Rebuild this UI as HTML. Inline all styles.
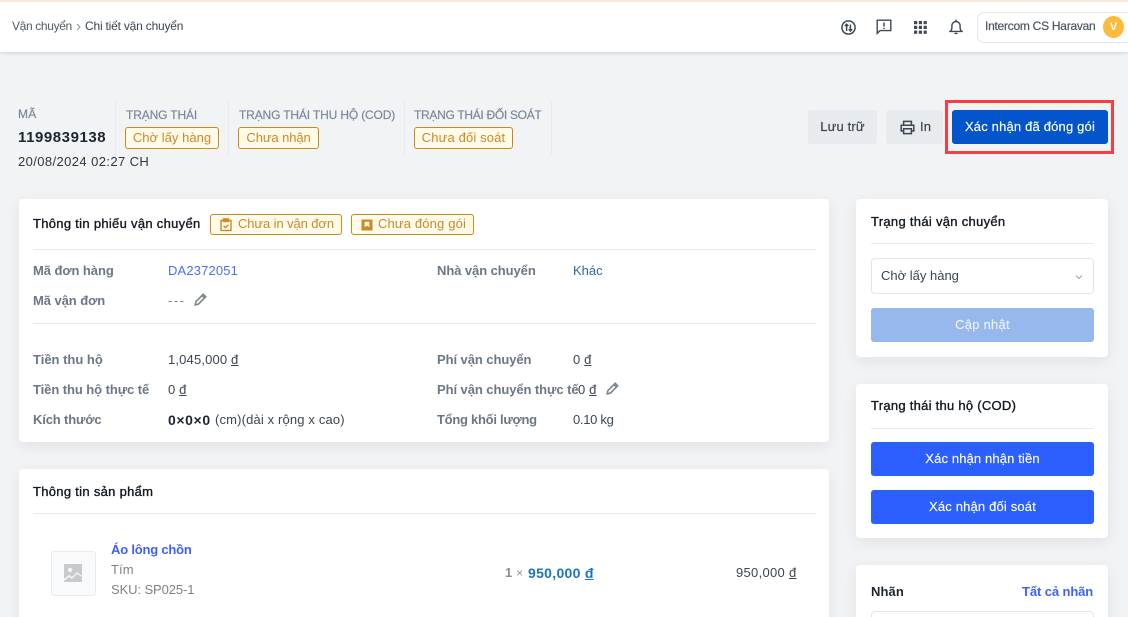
<!DOCTYPE html>
<html lang="vi"><head><meta charset="utf-8"><title>Chi tiết vận chuyển</title>
<style>
html,body{margin:0;padding:0;width:1128px;height:617px;overflow:hidden}
#p{width:1128px;height:617px;overflow:hidden;position:relative;background:#f1f3f5;font-family:"Liberation Sans","Noto Sans CJK JP",sans-serif;font-size:13px;color:#212b36}
.t{position:absolute;line-height:20px;white-space:nowrap;letter-spacing:.16px}
.l{color:#6b7785;font-weight:700;font-size:13px;letter-spacing:-.07px}
.h{color:#78859a;font-size:12px;letter-spacing:-.16px;-webkit-text-stroke:.15px #78859a}
.v{color:#3a4552}
.ti{color:#111820;letter-spacing:.3px;-webkit-text-stroke:.35px #111820}
.card{position:absolute;background:#fff;border-radius:4px;box-shadow:0 4px 14px rgba(50,60,80,.09)}
.hr{position:absolute;height:1px;background:#e6e9ed}
.tag{position:absolute;box-sizing:border-box;border:1px solid #cb8a14;border-radius:3px;background:#fffbe8;color:#c98a2b;line-height:20px;white-space:nowrap;text-align:center;letter-spacing:.03px}
.btn{position:absolute;box-sizing:border-box;border-radius:3px;text-align:center;white-space:nowrap;letter-spacing:.15px;-webkit-text-stroke:.15px currentColor}
.vs{position:absolute;width:1px;background:#e7e9ec}
svg{position:absolute;display:block}
u{text-underline-offset:1px}
</style></head><body><div id="p">
<div style="position:absolute;left:0;top:0;width:1128px;height:52px;background:#fff;box-shadow:0 1px 4px rgba(0,0,0,.14)"></div>
<div style="position:absolute;left:0;top:0;width:1128px;height:2px;background:#f8eadb"></div>

<div class="t" style="left:12px;top:16px;font-size:12px;color:#4f5b68;letter-spacing:-.35px">Vận chuyển</div>
<svg style="left:75px;top:23px" width="8" height="8" viewBox="0 0 8 8"><path d="M2 1l3 3-3 3" fill="none" stroke="#8d96a1" stroke-width="1"/></svg>
<div class="t" style="left:85px;top:16px;font-size:12px;color:#3a4552;letter-spacing:-.2px">Chi tiết vận chuyển</div>

<svg style="left:840px;top:19px" width="17" height="17" viewBox="0 0 17 17" fill="none" stroke="#3f4a56" stroke-width="1.5"><circle cx="8.5" cy="8.5" r="6.6"/><path d="M6.6 12V5.3M4.9 7l1.7-1.8L8.3 7M10.4 5.5V12M8.8 10.2l1.6 1.8 1.7-1.8"/></svg>
<svg style="left:876px;top:19px" width="16" height="16" viewBox="0 0 16 16" fill="none" stroke="#3f4a56" stroke-width="1.4"><path d="M1.2 1.2h13.6v10.4H4L1.2 14.4z"/><path d="M8 3.5v4M8 8.8v1.2" stroke-width="1.5"/></svg>
<svg style="left:914px;top:21px" width="13" height="13" viewBox="0 0 13 13" fill="#3f4a56"><rect x="0" y="0" width="3.2" height="3.2"/><rect x="4.8" y="0" width="3.2" height="3.2"/><rect x="9.6" y="0" width="3.2" height="3.2"/><rect x="0" y="4.8" width="3.2" height="3.2"/><rect x="4.8" y="4.8" width="3.2" height="3.2"/><rect x="9.6" y="4.8" width="3.2" height="3.2"/><rect x="0" y="9.6" width="3.2" height="3.2"/><rect x="4.8" y="9.6" width="3.2" height="3.2"/><rect x="9.6" y="9.6" width="3.2" height="3.2"/></svg>
<svg style="left:949px;top:19px" width="14" height="16" viewBox="0 0 14 16" fill="none" stroke="#3f4a56" stroke-width="1.4"><path d="M1.2 12.4h11.6c-1.2-1-1.7-2-1.7-3.6V6.6A4.1 4.1 0 0 0 7 2.5a4.1 4.1 0 0 0-4.1 4.1v2.2c0 1.6-.5 2.6-1.7 3.6z"/><path d="M7 .6v2M5.4 14.4h3.2"/></svg>

<div style="position:absolute;left:977px;top:12px;width:170px;height:31px;box-sizing:border-box;border:1px solid #e4e7eb;border-radius:7px;background:#fff"></div>
<div class="t" style="left:985px;top:16px;font-size:12px;color:#4b5663;letter-spacing:-.26px;-webkit-text-stroke:.2px #4b5663">Intercom CS Haravan</div>
<div style="position:absolute;left:1103px;top:16px;width:21px;height:22px;border-radius:50%;background:#fdbb3c;color:#fff;font-size:11px;font-weight:700;text-align:center;line-height:22px">V</div>

<div class="t h" style="left:18px;top:104px;letter-spacing:.2px">MÃ</div>
<div class="t" style="left:18px;top:128px;font-size:15px;font-weight:700;color:#1c2630;letter-spacing:.56px">1199839138</div>
<div class="t" style="left:18px;top:152px;color:#2d3743;letter-spacing:.4px">20/08/2024 02:27 CH</div>
<div class="vs" style="left:115px;top:101px;height:54px"></div>
<div class="t h" style="left:126px;top:105px;letter-spacing:-.14px">TRẠNG THÁI</div>
<div class="tag" style="left:125px;top:127px;width:94px;height:22px">Chờ lấy hàng</div>
<div class="vs" style="left:228px;top:101px;height:54px"></div>
<div class="t h" style="left:239px;top:105px;letter-spacing:-.15px">TRẠNG THÁI THU HỘ (COD)</div>
<div class="tag" style="left:238px;top:127px;width:81px;height:22px;letter-spacing:-.1px">Chưa nhận</div>
<div class="vs" style="left:404px;top:101px;height:54px"></div>
<div class="t h" style="left:414px;top:105px;letter-spacing:-.3px">TRẠNG THÁI ĐỐI SOÁT</div>
<div class="tag" style="left:414px;top:127px;width:99px;height:22px;letter-spacing:.15px">Chưa đối soát</div>
<div class="vs" style="left:551px;top:101px;height:54px"></div>

<div class="btn" style="left:808px;top:110px;width:69px;height:34px;background:#e8ebee;line-height:34px;color:#3a3f45">Lưu trữ</div>
<div class="btn" style="left:886px;top:110px;width:57px;height:34px;background:#e8ebee;line-height:34px;color:#3a3f45;text-align:left;padding-left:34px">In</div>
<svg style="left:900px;top:120px" width="15" height="15" viewBox="0 0 15 15" fill="none" stroke="#3f4650" stroke-width="1.5"><path d="M3.6 5V1.4h7.8V5M3.6 11H1.2V5.2h12.6V11h-2.4"/><path d="M3.6 8.8h7.8v4.8H3.6z"/></svg>
<div style="position:absolute;left:945px;top:100px;width:169px;height:54px;box-sizing:border-box;border:3px solid #f33f44"></div>
<div class="btn" style="left:952px;top:110px;width:156px;height:34px;background:#0454cc;color:#fff;line-height:34px;letter-spacing:.18px">Xác nhận đã đóng gói</div>

<!-- main card -->
<div class="card" style="left:19px;top:199px;width:810px;height:243px"></div>
<div class="t ti" style="left:33px;top:214px">Thông tin phiếu vận chuyển</div>
<div class="tag" style="left:210px;top:214px;width:132px;height:21px;padding-left:20px;line-height:18px;letter-spacing:-.1px">Chưa in vận đơn</div>
<svg style="left:219px;top:218px" width="14" height="14" viewBox="0 0 14 14" fill="none" stroke="#c98a2b" stroke-width="1.4"><path d="M4 2.4H2v10h10v-10h-2"/><path d="M4.4 1h5.2v2.6H4.4z" fill="#c98a2b"/><path d="M4.6 8l1.8 1.7 3-3"/></svg>
<div class="tag" style="left:351px;top:214px;width:123px;height:21px;padding-left:19px;line-height:18px;letter-spacing:.15px">Chưa đóng gói</div>
<svg style="left:361px;top:219px" width="12" height="12" viewBox="0 0 12 12"><path d="M.5.5h11v11H.5z" fill="#c98a2b"/><path d="M3.6 2.8h4.8v5.4L6 6.8 3.6 8.2z" fill="#fff4cf"/></svg>
<div class="hr" style="left:33px;top:249px;width:783px"></div>

<div class="t l" style="left:33px;top:261px">Mã đơn hàng</div>
<div class="t" style="left:168px;top:261px;color:#4a6ff0;letter-spacing:.15px">DA2372051</div>
<div class="t l" style="left:437px;top:261px">Nhà vận chuyển</div>
<div class="t" style="left:573px;top:261px;color:#2a6a9e;letter-spacing:0">Khác</div>
<div class="t l" style="left:33px;top:291px">Mã vận đơn</div>
<div class="t" style="left:168px;top:291px;color:#7b8590;letter-spacing:1.5px">---</div>
<svg style="left:194px;top:293px" width="13" height="13" viewBox="0 0 13 13" fill="none" stroke="#7d858d" stroke-width="1.6"><path d="M1.2 11.8l.7-3.2L9.2 1.3l2.5 2.5-7.3 7.3zM8 2.6l2.4 2.4"/></svg>
<div class="hr" style="left:33px;top:323px;width:783px"></div>

<div class="t l" style="left:33px;top:350px;letter-spacing:0">Tiền thu hộ</div>
<div class="t v" style="left:168px;top:350px">1,045,000 <u>đ</u></div>
<div class="t l" style="left:437px;top:350px">Phí vận chuyển</div>
<div class="t v" style="left:573px;top:350px">0 <u>đ</u></div>
<div class="t l" style="left:33px;top:380px">Tiền thu hộ thực tế</div>
<div class="t v" style="left:168px;top:380px">0 <u>đ</u></div>
<div class="t l" style="left:437px;top:380px">Phí vận chuyển thực tế</div>
<div class="t v" style="left:578px;top:380px">0 <u>đ</u></div>
<svg style="left:606px;top:382px" width="13" height="13" viewBox="0 0 13 13" fill="none" stroke="#7d858d" stroke-width="1.6"><path d="M1.2 11.8l.7-3.2L9.2 1.3l2.5 2.5-7.3 7.3zM8 2.6l2.4 2.4"/></svg>
<div class="t l" style="left:33px;top:410px;letter-spacing:-.15px">Kích thước</div>
<div class="t" style="left:168px;top:410px;color:#1c2630;font-weight:700;font-size:14px;letter-spacing:.6px">0×0×0</div>
<div class="t v" style="left:215px;top:410px;letter-spacing:.15px">(cm)(dài x rộng x cao)</div>
<div class="t l" style="left:437px;top:410px;letter-spacing:-.27px">Tổng khối lượng</div>
<div class="t v" style="left:573px;top:410px;letter-spacing:-.3px">0.10 kg</div>

<!-- product card -->
<div class="card" style="left:19px;top:469px;width:810px;height:170px"></div>
<div class="t ti" style="left:33px;top:482px">Thông tin sản phẩm</div>
<div class="hr" style="left:33px;top:513px;width:783px"></div>
<div style="position:absolute;left:51px;top:551px;width:45px;height:45px;box-sizing:border-box;background:#f9fafb;border:1px solid #e8eaed;border-radius:3px"></div>
<svg style="left:64px;top:564px" width="18" height="18" viewBox="0 0 18 18"><rect width="18" height="18" fill="#c8cbce"/><circle cx="6" cy="6" r="2.2" fill="#f4f5f6"/><path d="M0 15l5-4 3 2 5-5 5 4v1l-5-3-5 5-3-2-5 4z" fill="#f4f5f6"/></svg>
<div class="t" style="left:111px;top:540px;color:#3f5ff0;font-weight:700;letter-spacing:-.2px">Áo lông chồn</div>
<div class="t" style="left:111px;top:560px;color:#7d8287;letter-spacing:.1px">Tím</div>
<div class="t" style="left:111px;top:580px;color:#7d8287;letter-spacing:-.1px">SKU: SP025-1</div>
<div class="t" style="left:505px;top:563px;color:#8a9199;font-weight:700">1 <span style="font-weight:400;font-size:12px">×</span></div>
<div class="t" style="left:528px;top:563px;color:#1b75bb;font-weight:700;font-size:14px;letter-spacing:.3px">950,000 <u>đ</u></div>
<div class="t v" style="left:736px;top:563px;letter-spacing:.3px">950,000 <u>đ</u></div>

<!-- side 1 -->
<div class="card" style="left:856px;top:199px;width:252px;height:158px"></div>
<div class="t ti" style="left:871px;top:212px">Trạng thái vận chuyển</div>
<div class="hr" style="left:871px;top:243px;width:223px"></div>
<div style="position:absolute;left:871px;top:258px;width:223px;height:36px;box-sizing:border-box;border:1px solid #e2e5e9;border-radius:4px;background:#fff"></div>
<div class="t" style="left:881px;top:266px;color:#3a4552;letter-spacing:0">Chờ lấy hàng</div>
<svg style="left:1075px;top:274px" width="8" height="6" viewBox="0 0 8 6"><path d="M1 1.5l3 3 3-3" fill="none" stroke="#9aa1a9" stroke-width="1"/></svg>
<div class="btn" style="left:871px;top:308px;width:223px;height:34px;background:#97b8ec;color:#eaf1fb;line-height:34px;letter-spacing:.25px">Cập nhật</div>

<!-- side 2 -->
<div class="card" style="left:856px;top:384px;width:252px;height:154px"></div>
<div class="t ti" style="left:871px;top:396px;letter-spacing:.27px">Trạng thái thu hộ (COD)</div>
<div class="hr" style="left:871px;top:428px;width:223px"></div>
<div class="btn" style="left:871px;top:442px;width:223px;height:34px;background:#2b5fff;color:#fff;line-height:33px;letter-spacing:.13px">Xác nhận nhận tiền</div>
<div class="btn" style="left:871px;top:490px;width:223px;height:34px;background:#2b5fff;color:#fff;line-height:33px;letter-spacing:.17px">Xác nhận đối soát</div>

<!-- side 3 -->
<div class="card" style="left:856px;top:565px;width:252px;height:80px"></div>
<div class="t" style="left:871px;top:582px;color:#1c2630;font-weight:700;letter-spacing:.1px">Nhãn</div>
<div class="t" style="left:1022px;top:582px;color:#3f62f5;font-weight:700;letter-spacing:-.1px">Tất cả nhãn</div>
<div style="position:absolute;left:871px;top:611px;width:223px;height:30px;box-sizing:border-box;border:1px solid #e2e5e9;border-radius:4px;background:#fff"></div>
</div></body></html>
